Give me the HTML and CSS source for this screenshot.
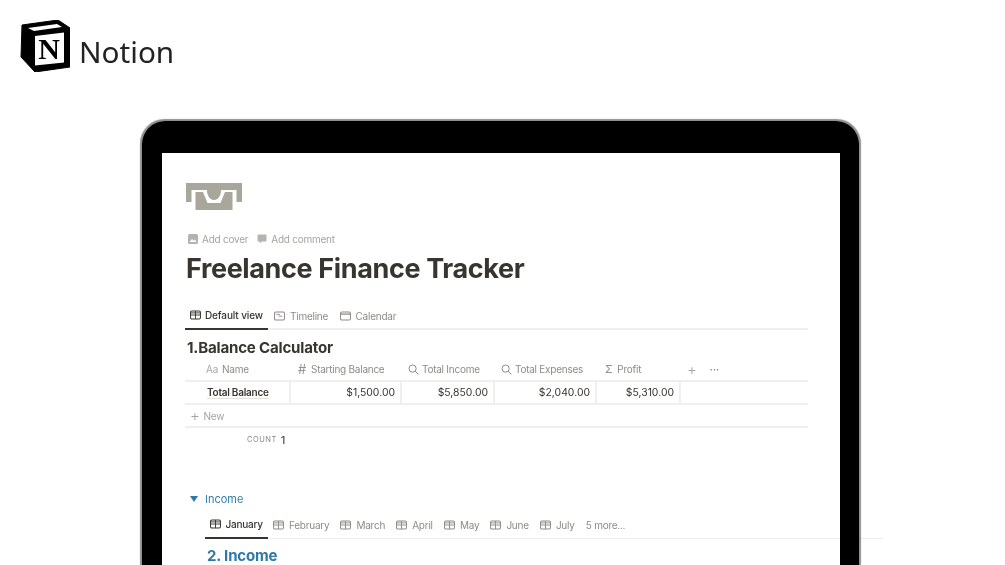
FILE: index.html
```html
<!DOCTYPE html>
<html lang="en">
<head>
<meta charset="utf-8">
<title>Notion - Freelance Finance Tracker</title>
<link rel="stylesheet" href="styles.css">
</head>
<body>
<svg width="0" height="0" class="defs">
  <symbol id="i-table" viewBox="0 0 12 10"><rect x=".6" y=".6" width="10.8" height="8.8" rx="1.4" fill="none" stroke="currentColor" stroke-width="1.1"/><path d="M.6 5h10.8M6 .6v8.8M.6 2.7h10.8" fill="none" stroke="currentColor" stroke-width="1"/></symbol>
  <symbol id="i-timeline" viewBox="0 0 12 10"><rect x=".6" y=".6" width="10.8" height="8.8" rx="1.4" fill="none" stroke="currentColor" stroke-width="1.1"/><path d="M2.5 3.2h4M5 5.2h4" fill="none" stroke="currentColor" stroke-width="1"/></symbol>
  <symbol id="i-cal" viewBox="0 0 12 10"><rect x=".6" y=".6" width="10.8" height="8.8" rx="1.4" fill="none" stroke="currentColor" stroke-width="1.1"/><path d="M.6 2.9h10.8" fill="none" stroke="currentColor" stroke-width="1.4"/></symbol>
  <symbol id="i-search" viewBox="0 0 11 11"><circle cx="4.6" cy="4.6" r="3.6" fill="none" stroke="currentColor" stroke-width="1"/><path d="M7.2 7.2l3.2 3.2" fill="none" stroke="currentColor" stroke-width="1"/></symbol>
</svg>

<header class="brand">
  <svg class="brand-mark" viewBox="0 0 50 52" width="50" height="52">
    <path d="M2 5 38 0l12 8v39l-35 5L1 37z" fill="#000" stroke="#000" stroke-linejoin="round"/>
    <path d="M15 16 44 12.500v30L15 45.500z" fill="#fff"/>
    <path d="M8 8 37 4l5 3-28 4z" fill="#fff"/>
    <text x="29" y="38.500" class="brand-n">N</text>
  </svg>
  <span class="brand-name">Notion</span>
</header>

<main class="device">
  <div class="screen">
    <svg class="page-icon" viewBox="0 0 56 28" width="56" height="28">
      <path d="M0 0h56v19h-5.500V7h-45v12H0z" fill="#a9a69b"/>
      <path d="M21 7h14c0 6-3 10-7 10s-7-4-7-10z" fill="#a9a69b"/>
      <path d="M9.500 9H17l4.500 11h13L39 9h7.500v18h-37z" fill="#a9a69b"/>
    </svg>

    <div class="page-actions">
      <span class="action">
        <svg class="act-icon" viewBox="0 0 10 10"><rect width="10" height="10" rx="1.500" fill="#b4b3b0"/><path d="M1.500 8l2.500-3 1.800 1.800 1.200-1.300 1.500 2.500z" fill="#fff"/></svg>
        Add cover
      </span>
      <span class="action">
        <svg class="act-icon" viewBox="0 0 10 10"><path d="M1.500 .5h7a1 1 0 0 1 1 1v5a1 1 0 0 1-1 1H5L2.800 9.500V7.500H1.500a1 1 0 0 1-1-1v-5a1 1 0 0 1 1-1z" fill="#b4b3b0"/></svg>
        Add comment
      </span>
    </div>

    <h1 class="page-title">Freelance Finance Tracker</h1>

    <nav class="views">
      <span class="view view-on"><svg class="tab-icon"><use href="#i-table"/></svg>Default view</span>
      <span class="view"><svg class="tab-icon"><use href="#i-timeline"/></svg>Timeline</span>
      <span class="view"><svg class="tab-icon"><use href="#i-cal"/></svg>Calendar</span>
    </nav>

    <h2 class="db-title">1.Balance Calculator</h2>

    <section class="table">
      <div class="row row-head">
        <div class="cell c-name"><span class="aa">Aa</span>Name</div>
        <div class="cell c-start"><span class="hash">#</span>Starting Balance</div>
        <div class="cell c-inc"><svg class="col-icon"><use href="#i-search"/></svg>Total Income</div>
        <div class="cell c-exp"><svg class="col-icon"><use href="#i-search"/></svg>Total Expenses</div>
        <div class="cell c-pro"><span class="sigma">Σ</span>Profit</div>
        <div class="cell c-add"><span class="plus">+</span><span class="dots">···</span></div>
      </div>
      <div class="row row-body">
        <div class="cell c-name strong"><span class="under">Total Balance</span></div>
        <div class="cell c-start num">$1,500.00</div>
        <div class="cell c-inc num">$5,850.00</div>
        <div class="cell c-exp num">$2,040.00</div>
        <div class="cell c-pro num">$5,310.00</div>
      </div>
      <div class="row row-new"><span class="new-plus">+</span>New</div>
      <div class="count"><span class="count-label">COUNT</span><span class="count-val">1</span></div>
    </section>

    <div class="toggle"><span class="caret"></span>Income</div>

    <nav class="months">
      <span class="month month-on"><svg class="tab-icon"><use href="#i-table"/></svg>January</span>
      <span class="month"><svg class="tab-icon"><use href="#i-table"/></svg>February</span>
      <span class="month"><svg class="tab-icon"><use href="#i-table"/></svg>March</span>
      <span class="month"><svg class="tab-icon"><use href="#i-table"/></svg>April</span>
      <span class="month"><svg class="tab-icon"><use href="#i-table"/></svg>May</span>
      <span class="month"><svg class="tab-icon"><use href="#i-table"/></svg>June</span>
      <span class="month"><svg class="tab-icon"><use href="#i-table"/></svg>July</span>
      <span class="month">5 more...</span>
    </nav>

    <h2 class="income-title">2. Income</h2>
  </div>
</main>
</body>
</html>
```
FILE: styles.css
```css
* { box-sizing: border-box; }
html, body { height: 565px; overflow: hidden; }
body { margin: 0; background: #fff; font-family: Inter, "Liberation Sans", sans-serif; color: #37352f; }
.defs { position: absolute; }

.brand { display: flex; align-items: flex-start; height: 120px; padding: 20px 0 0 20px; filter: blur(.3px); }
.brand-mark { flex: none; }
.brand-n { font: 700 30px "Liberation Serif", serif; text-anchor: middle; fill: #000; }
.brand-name { font: 400 29.700px/40px "Noto Sans", sans-serif; color: #222; margin: 12px 0 0 9px; }

.device { position: relative; width: 720px; height: 445px; margin-left: 140px; padding: 33px 22px 0; }
.device::after {
  content: ""; position: absolute; inset: 1px 1px 0 2px;
  border: solid #000; border-width: 32px 19px 0 20px;
  border-radius: 23px 23px 0 0;
  box-shadow: 0 0 1px 1.500px #8f8f8f;
}
.screen { filter: blur(.4px); padding: 0 0 0 23px; height: 412px; }

.page-icon { display: block; margin: 30px 0 0 1px; }
.page-actions { display: flex; gap: 9px; margin: 21px 0 0 3px; font-size: 10px; letter-spacing: -.25px; color: #a5a4a0; line-height: 14px; }
.action { display: flex; align-items: center; gap: 4px; }
.act-icon { width: 10px; height: 10px; }
.page-title { margin: 6px 0 0 1px; font-size: 27px; font-weight: 700; line-height: 34px; letter-spacing: -.37px; color: #37352f; }

.views { display: flex; width: 623px; height: 29px; margin: 15px 0 0; border-bottom: 2px solid #efefed; font-size: 10px; letter-spacing: -.25px; color: #8d8b86; white-space: nowrap; }
.view { display: flex; align-items: center; gap: 5px; height: 29px; padding: 0 0 0 5px; margin-right: 6.500px; }
.view-on { width: 83px; color: #37352f; font-weight: 500; letter-spacing: -.12px; gap: 4px; border-bottom: 2px solid #37352f; margin-right: 1px; }
.tab-icon { width: 11px; height: 10px; flex: none; }

.db-title { margin: 8px 0 0 2px; font-size: 15.100px; line-height: 20px; font-weight: 700; letter-spacing: -.2px; }

.table { width: 623px; margin: 0; font-size: 10px; letter-spacing: -.25px; }
.row { display: flex; border-bottom: 2px solid #efefed; }
.cell { display: flex; align-items: center; height: 100%; }
.row-head { height: 24px; color: #8d8b86; }
.row-body { height: 23px; color: #37352f; }
.row-new { height: 23px; align-items: center; padding-left: 5px; color: #a5a4a0; }
.c-name { width: 106px; padding-left: 21px; }
.c-start { width: 111px; }
.c-inc { width: 93px; }
.c-exp { width: 102px; }
.c-pro { width: 84px; }
.row-head .c-start { padding-left: 7px; }
.row-head .c-inc, .row-head .c-exp { padding-left: 6px; }
.row-head .c-pro { padding-left: 8px; }
.row-head .c-add { padding-left: 6px; }
.row-body .cell { border-right: 2px solid #efefed; }
.row-body .c-name { padding-left: 22px; }
.row-body .num { justify-content: flex-end; padding-right: 5px; font-size: 10.400px; letter-spacing: 0; }
.strong { font-weight: 600; }
.under { border-bottom: 1px solid #e3e2df; line-height: 12px; }
.aa { color: #aaa9a5; margin-right: 4px; }
.hash { font-size: 13px; margin-right: 5px; color: #94928d; }
.sigma { font-size: 11px; margin-right: 5px; color: #94928d; }
.col-icon { width: 11px; height: 11px; margin-right: 3px; color: #8d8b86; }
.plus { font-size: 15px; font-weight: 300; color: #a5a4a0; }
.dots { margin-left: 13px; font-weight: 700; color: #8d8b86; }
.new-plus { font-size: 15px; font-weight: 300; margin-right: 4px; }
.count { display: flex; align-items: center; height: 23px; padding-left: 62px; gap: 4px; }
.count-label { font-size: 7.500px; letter-spacing: .5px; color: #8d8b86; }
.count-val { font-size: 11px; font-weight: 500; color: #55534e; }

.toggle { display: flex; align-items: center; margin: 40px 0 0 5px; font-size: 11px; line-height: 16px; color: #337ea9; }
.caret { width: 0; height: 0; margin-right: 7px; border: solid transparent; border-width: 6px 4px 0; border-top-color: #2c78a8; }

.months { display: flex; width: 678px; height: 28px; margin: 4px 0 0 20px; border-bottom: 1px solid #efefed; font-size: 10px; letter-spacing: -.25px; color: #8d8b86; }
.month { display: flex; align-items: center; gap: 5px; height: 28px; padding: 0 0 0 5px; margin-right: 6.150px; white-space: nowrap; }
.month-on { width: 63px; color: #37352f; font-weight: 500; gap: 4.500px; border-bottom: 2px solid #37352f; margin-right: 0; }

.income-title { margin: 7px 0 0 22px; font-size: 15px; line-height: 19px; font-weight: 700; color: #2d7aa8; letter-spacing: -.15px; }
```
